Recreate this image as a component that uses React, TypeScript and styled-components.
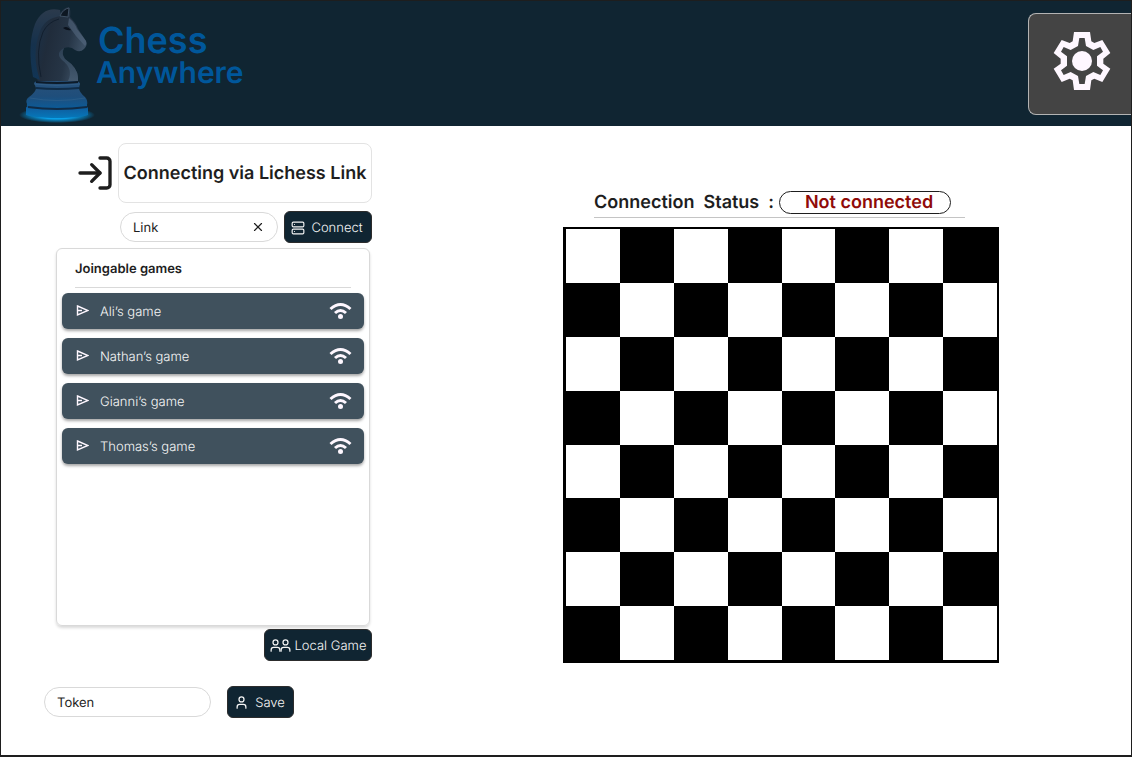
import React from "react";
import styled, { createGlobalStyle } from "styled-components";
import { LogIn, Server, User, X } from "lucide-react";

const navy = "#102532";
const slate = "#40515d";
const ink = "#1e1e1e";

const GlobalStyle = createGlobalStyle`
  *, *::before, *::after { box-sizing: border-box; }
  body {
    margin: 0;
    background: #fff;
    color: ${ink};
    font-family: Inter, sans-serif;
    text-rendering: geometricPrecision;
  }
  button, input { font: inherit; text-rendering: inherit; }
`;

const Page = styled.div`
  min-height: 100vh;
  display: flex;
  flex-direction: column;
  border: 1px solid ${ink};
  border-bottom-width: 2px;
`;

const Header = styled.header`
  display: flex;
  justify-content: space-between;
  align-items: center;
  height: 125px;
  background: ${navy};
`;

const Brand = styled.a`
  display: flex;
  align-items: flex-start;
  color: #00579b;
  text-decoration: none;
`;

const BrandName = styled.span`
  display: flex;
  flex-direction: column;
  padding-top: 23px;
  font-weight: 600;
`;

const BrandLine = styled.span<{ $size: number }>`
  font-size: ${(p) => p.$size}px;
  line-height: 33px;
  padding-left: ${(p) => (p.$size > 32 ? 2 : 0)}px;
`;

const SettingsButton = styled.button`
  display: flex;
  align-items: center;
  justify-content: center;
  width: 103px;
  height: 102px;
  padding: 0 0 5px 4px;
  border: 1px solid #b3b3b3;
  border-right: 0;
  border-radius: 8px 0 0 8px;
  background: #444;
  cursor: pointer;
`;

const Main = styled.main`
  flex: 1;
  display: flex;
  flex-wrap: wrap;
  justify-content: space-between;
  align-items: flex-start;
  gap: 32px;
  padding: 17px 132px 32px 43px;
`;

const Lobby = styled.section`
  flex: 0 1 328px;
`;

const TitleRow = styled.div`
  display: flex;
  align-items: center;
  justify-content: flex-end;
  gap: 3px;
`;

const Title = styled.h1`
  margin: 0;
  width: 254px;
  height: 60px;
  border: 1px solid #e3e3e3;
  border-radius: 8px;
  font-size: 18px;
  font-weight: 600;
  line-height: 60px;
  text-align: center;
  white-space: nowrap;
`;

const LinkForm = styled.form`
  display: flex;
  align-items: center;
  justify-content: flex-end;
  gap: 6px;
  margin-top: 8px;
`;

const Field = styled.div<{ $width: number }>`
  display: flex;
  align-items: center;
  width: ${(p) => p.$width}px;
  height: 30px;
  padding: 0 12px;
  border: 1px solid #d9d9d9;
  border-radius: 15px;
`;

const TextInput = styled.input`
  flex: 1;
  min-width: 0;
  padding: 1px 0 0;
  border: 0;
  outline: 0;
  background: none;
  color: ${ink};
  font-size: 13px;
`;

const ClearButton = styled.button`
  display: flex;
  padding: 0;
  border: 0;
  background: none;
  color: ${ink};
`;

const ActionButton = styled.button<{ $width: number; $gap?: number }>`
  display: flex;
  align-items: center;
  justify-content: center;
  gap: ${(p) => p.$gap ?? 6}px;
  width: ${(p) => p.$width}px;
  height: 32px;
  padding: 1px 2px 0 0;
  border: 1px solid #2c2c2c;
  border-radius: 6px;
  background: ${navy};
  color: #f5f5f5;
  font-size: 13px;
  font-weight: 300;
  white-space: nowrap;
  cursor: pointer;
`;

const IconPair = styled.span`
  display: flex;
  & > svg + svg { margin-left: -5px; }
`;

const GamesPanel = styled.section`
  min-height: 378px;
  margin: 5px 2px 0 12px;
  padding: 0 5px;
  border: 1px solid #d9d9d9;
  border-radius: 6px;
  box-shadow: 0 2px 3px rgba(0, 0, 0, 0.15);
`;

const PanelTitle = styled.h2`
  margin: 0 13px 5px;
  padding-top: 2px;
  border-bottom: 1px solid #d9d9d9;
  font-size: 13px;
  font-weight: 600;
  line-height: 36px;
`;

const GameList = styled.ul`
  display: grid;
  gap: 9px;
  margin: 0;
  padding: 0;
  list-style: none;
`;

const GameButton = styled.button`
  display: flex;
  align-items: center;
  width: 100%;
  height: 36px;
  padding: 0 12px 0 13px;
  border: 0;
  border-radius: 6px;
  background: ${slate};
  box-shadow: 0 2px 3px rgba(0, 0, 0, 0.35);
  color: #f5f5f5;
  font-size: 13px;
  font-weight: 300;
  text-align: left;
  cursor: pointer;
`;

const GameName = styled.span`
  flex: 1;
  padding: 2px 0 0 11px;
`;

const LocalRow = styled.div`
  display: flex;
  justify-content: flex-end;
  margin-top: 3px;
`;

const TokenForm = styled.form`
  display: flex;
  align-items: center;
  gap: 16px;
  margin-top: 25px;
`;

const Play = styled.section`
  flex: 0 1 436px;
  padding-top: 48px;
`;

const Status = styled.div`
  display: flex;
  align-items: center;
  gap: 5px;
  margin: 0 34px 9px 31px;
  padding-bottom: 3px;
  border-bottom: 1px solid #c4c4c4;
  font-size: 18px;
  font-weight: 600;
  line-height: 21px;
  white-space: pre;
`;

const StatusPill = styled.output`
  width: 172px;
  padding-left: 8px;
  border: 1px solid ${ink};
  border-radius: 12px;
  color: #900b09;
  text-align: center;
`;

const Board = styled.div`
  display: grid;
  grid-template: repeat(8, 1fr) / repeat(8, 1fr);
  aspect-ratio: 1;
  border: solid #000;
  border-width: 2px 2px 3px 3px;
`;

const Square = styled.div<{ $dark: boolean }>`
  background: ${(p) => (p.$dark ? "#000" : "#fff")};
`;

const KnightLogo = () => (
  <svg width="95" height="125" viewBox="1 1 95 125" aria-hidden="true">
    <defs>
      <linearGradient id="body" x1="0" y1="0" x2="1" y2="0.3">
        <stop offset="0" stopColor="#17334f" />
        <stop offset="0.4" stopColor="#202c3b" />
        <stop offset="0.75" stopColor="#263546" />
        <stop offset="1" stopColor="#3c4f63" />
      </linearGradient>
      <linearGradient id="mane" x1="0" y1="0" x2="0" y2="1">
        <stop offset="0" stopColor="#2b3a4c" />
        <stop offset="0.5" stopColor="#15314c" />
        <stop offset="1" stopColor="#123555" />
      </linearGradient>
      <linearGradient id="chest" x1="0" y1="0" x2="0" y2="1">
        <stop offset="0" stopColor="#2c3f53" />
        <stop offset="1" stopColor="#44596e" />
      </linearGradient>
      <linearGradient id="base" x1="0" y1="0" x2="0" y2="1">
        <stop offset="0" stopColor="#28517a" />
        <stop offset="0.55" stopColor="#1f4e7b" />
        <stop offset="1" stopColor="#0b5b98" />
      </linearGradient>
      <linearGradient id="foot" x1="0" y1="0" x2="0" y2="1">
        <stop offset="0" stopColor="#10599a" />
        <stop offset="1" stopColor="#0678ba" />
      </linearGradient>
      <radialGradient id="glow">
        <stop offset="0.5" stopColor="#0aa0e8" />
        <stop offset="0.8" stopColor="#087bb5" stopOpacity="0.6" />
        <stop offset="1" stopColor="#087bb5" stopOpacity="0" />
      </radialGradient>
    </defs>
    <ellipse cx="57" cy="115" rx="38" ry="8" fill="url(#glow)" />
    <path d="M26 108Q26 106 30 106H84Q88 106 88 109V115Q80 118 57 118Q34 118 26 115Z" fill="url(#foot)" />
    <path d="M34 83Q35 81 39 81H76Q80 82 80 84L79 88Q79 92 85 97Q88 100 87 105Q88 108 83 108Q57 110 30 108Q26 107 27 104Q25 100 29 97Q36 92 36 88Z" fill="url(#base)" />
    <path d="M36 88Q57 90 79 88M28 107Q57 111 87 107" stroke="#102c47" strokeWidth="2" fill="none" />
    <path d="M34 84Q57 87 80 84M30 98Q57 103 85 98" stroke="#416b91" strokeWidth="1" fill="none" opacity="0.4" />
    <path d="M60 14Q63 8 69 7Q71 10 70 17Q76 23 78 29L86 41Q88 45 84 49Q80 53 75 50Q71 46 64 48Q61 54 65 59Q78 68 78 78V81H38Q30 68 32 47Q32 22 48 12Q53 8 60 14Z" fill="url(#body)" />
    <path d="M60 10Q43 6 35 24Q27 45 33 77L40 80Q31 55 40 31Q45 18 61 16Z" fill="url(#mane)" />
    <path d="M64 48Q61 54 65 59Q78 68 78 78V81H68Q74 69 62 60Q55 53 64 48Z" fill="url(#chest)" />
    <path d="M69 18Q75 23 77 29L86 41Q87 44 85 46Q75 36 68 25Z" fill="#53677e" opacity="0.6" />
    <path d="M60 16Q63 9 69 8L68 17Z" fill="#0d1722" stroke="#3e5063" />
    <path d="M63 28Q67 25 71 30Q67 31 63 28Z" fill="#0a111b" />
    <path d="M41 77Q35 50 43 32Q48 22 59 19" stroke="#121f2e" strokeWidth="1" fill="none" />
    <path d="M36 82Q57 84 78 82" stroke="#0d1b29" strokeWidth="2" fill="none" />
  </svg>
);

const GearIcon = () => (
  <svg width="60" height="60" viewBox="-90 -90 180 180" fill="#fef7ff" aria-hidden="true">
    <path
      fillRule="evenodd"
      d="M-24-87H24L28-59L37-54L61-63L85-24L64-7V8L85 23L61 63L37 53L28 58L24 87H-24L-28 58L-37 53L-61 63L-85 23L-64 8V-7L-85-24L-61-63L-37-54L-28-59Z
      M-8-69L-12-45L-34-33L-55-42L-63-28L-45-14V14L-63 28L-55 42L-34 33L-12 45L-8 69H8L12 45L34 33L55 42L63 28L45 14V-14L63-28L55-42L34-33L12-45L8-69Z"
    />
    <circle r="30" />
  </svg>
);

const SendIcon = () => (
  <svg width="14" height="14" viewBox="0 0 14 14" fill="none" stroke="#fef7ff" aria-hidden="true">
    <path d="M2.500 2L13 6.500L2.500 11V2ZM2.500 6.500H7" strokeWidth="1.400" />
  </svg>
);

const WifiIcon = () => (
  <svg width="24" height="18" viewBox="0 0 24 18" fill="none" stroke="#fef7ff" aria-hidden="true">
    <path d="M2.500 7Q12.500-2 22.500 7M7 11Q12.500 6 18 11" strokeWidth="3" />
    <circle cx="12.500" cy="14.500" r="2.500" fill="#fef7ff" stroke="none" />
  </svg>
);

const games = ["Ali’s game", "Nathan’s game", "Gianni’s game", "Thomas’s game"];
const squares = Array.from({ length: 64 }, (_, i) => (Math.floor(i / 8) + i) % 2 === 1);

export default function App() {
  return (
    <Page>
      <GlobalStyle />
      <Header>
        <Brand href="#">
          <KnightLogo />
          <BrandName>
            <BrandLine $size={36}>Chess</BrandLine>
            <BrandLine $size={30}>Anywhere</BrandLine>
          </BrandName>
        </Brand>
        <SettingsButton type="button" aria-label="Settings">
          <GearIcon />
        </SettingsButton>
      </Header>
      <Main>
        <Lobby>
          <TitleRow>
            <LogIn size={40} />
            <Title>Connecting via Lichess Link</Title>
          </TitleRow>
          <LinkForm onSubmit={(e) => e.preventDefault()}>
            <Field $width={158}>
              <TextInput aria-label="Link" defaultValue="Link" />
              <ClearButton type="button" aria-label="Clear link">
                <X size={14} />
              </ClearButton>
            </Field>
            <ActionButton $width={88}>
              <Server size={14} />
              Connect
            </ActionButton>
          </LinkForm>
          <GamesPanel>
            <PanelTitle>Joingable games</PanelTitle>
            <GameList>
              {games.map((name) => (
                <li key={name}>
                  <GameButton type="button">
                    <SendIcon />
                    <GameName>{name}</GameName>
                    <WifiIcon />
                  </GameButton>
                </li>
              ))}
            </GameList>
          </GamesPanel>
          <LocalRow>
            <ActionButton type="button" $width={108} $gap={2}>
              <IconPair>
                <User size={15} />
                <User size={15} />
              </IconPair>
              Local Game
            </ActionButton>
          </LocalRow>
          <TokenForm onSubmit={(e) => e.preventDefault()}>
            <Field $width={167}>
              <TextInput aria-label="Token" defaultValue="Token" />
            </Field>
            <ActionButton $width={67}>
              <User size={15} />
              Save
            </ActionButton>
          </TokenForm>
        </Lobby>
        <Play>
          <Status>
            {"Connection  Status  :"}
            <StatusPill>Not connected</StatusPill>
          </Status>
          <Board role="img" aria-label="Chess board">
            {squares.map((dark, i) => (
              <Square key={i} $dark={dark} />
            ))}
          </Board>
        </Play>
      </Main>
    </Page>
  );
}
